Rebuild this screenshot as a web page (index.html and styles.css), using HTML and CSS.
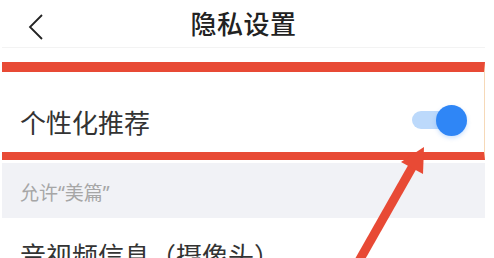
FILE: index.html
```html
<!DOCTYPE html>
<html lang="zh-CN">
<head>
    <meta charset="UTF-8">
    <meta name="viewport" content="width=device-width, initial-scale=1.0">
    <title>隐私设置</title>
    <link rel="stylesheet" href="styles.css">
</head>
<body>
    <div class="screen">
        <header class="nav-bar">
            <svg class="back-icon" width="16" height="26" viewBox="0 0 16 26">
                <polyline points="14,1 2,13 14,25" fill="none" stroke="#222" stroke-width="1.8" stroke-linejoin="miter"/>
            </svg>
            <h1 class="nav-title">隐私设置</h1>
        </header>

        <div class="setting-row first">
            <span class="setting-label">个性化推荐</span>
            <div class="switch on">
                <div class="switch-track"></div>
                <div class="switch-knob"></div>
            </div>
        </div>

        <div class="section-title">允许“美篇”</div>

        <div class="setting-row">
            <span class="setting-label">音视频信息（摄像头）</span>
        </div>

        <!-- annotation drawn over the screenshot -->
        <div class="mark-box"></div>
    </div>

    <svg class="mark-arrow" width="494" height="258" viewBox="0 0 494 258">
        <line x1="355" y1="268" x2="414" y2="164" stroke="#e84a35" stroke-width="9"/>
        <polygon points="424,147 401,162 423,174" fill="#e84a35"/>
    </svg>
</body>
</html>
```

FILE: styles.css
```css
* {
    box-sizing: border-box;
    margin: 0;
    padding: 0;
}

body {
    width: 494px;
    height: 258px;
    overflow: hidden;
    background-color: #fff;
    font-family: "Noto Sans CJK SC", "Noto Sans", sans-serif;
    color: #333;
    position: relative;
}

.screen {
    position: relative;
    width: 483px;
    height: 258px;
    overflow: hidden;
    margin-left: 2px;
}

.nav-bar {
    height: 48px;
    display: flex;
    align-items: center;
    justify-content: center;
    position: relative;
    border-bottom: 1px solid #f3f3f3;
}

.back-icon {
    position: absolute;
    left: 26px;
    top: 14px;
}

.nav-title {
    font-size: 26px;
    font-weight: 500;
    color: #222;
    line-height: 30px;
    margin-top: -2px;
    letter-spacing: 0.5px;
}

.setting-row {
    display: flex;
    align-items: center;
    justify-content: space-between;
    padding: 22px 18px 0 18px;
    background-color: #fff;
}

.setting-row.first {
    height: 115px;
    padding-top: 58px;
    padding-bottom: 26px;
}

.setting-label {
    font-size: 26px;
    line-height: 30px;
    color: #333;
}

.switch {
    position: relative;
    width: 55px;
    height: 31px;
    margin-top: -2px;
}

.switch-track {
    position: absolute;
    left: 0;
    top: 6px;
    width: 40px;
    height: 18px;
    border-radius: 9px;
    background-color: #bcd9fb;
}

.switch-knob {
    position: absolute;
    right: 0;
    top: 0;
    width: 31px;
    height: 31px;
    border-radius: 50%;
    background-color: #2f86f6;
    box-shadow: 0 2px 4px rgba(47, 134, 246, 0.25);
}

.section-title {
    height: 55px;
    padding: 19px 18px 0;
    background-color: #f1f2f6;
    font-family: "Noto Sans", "Noto Sans CJK SC", sans-serif;
    font-size: 19px;
    line-height: 23px;
    color: #a6a6a6;
}

.mark-box {
    position: absolute;
    left: 0;
    top: 62px;
    width: 483px;
    height: 98px;
    border-top: 10px solid #e84a35;
    border-bottom: 8px solid #e84a35;
    border-right: 1px solid #f6d9b8;
}

.mark-arrow {
    position: absolute;
    left: 0;
    top: 0;
    pointer-events: none;
}
```
